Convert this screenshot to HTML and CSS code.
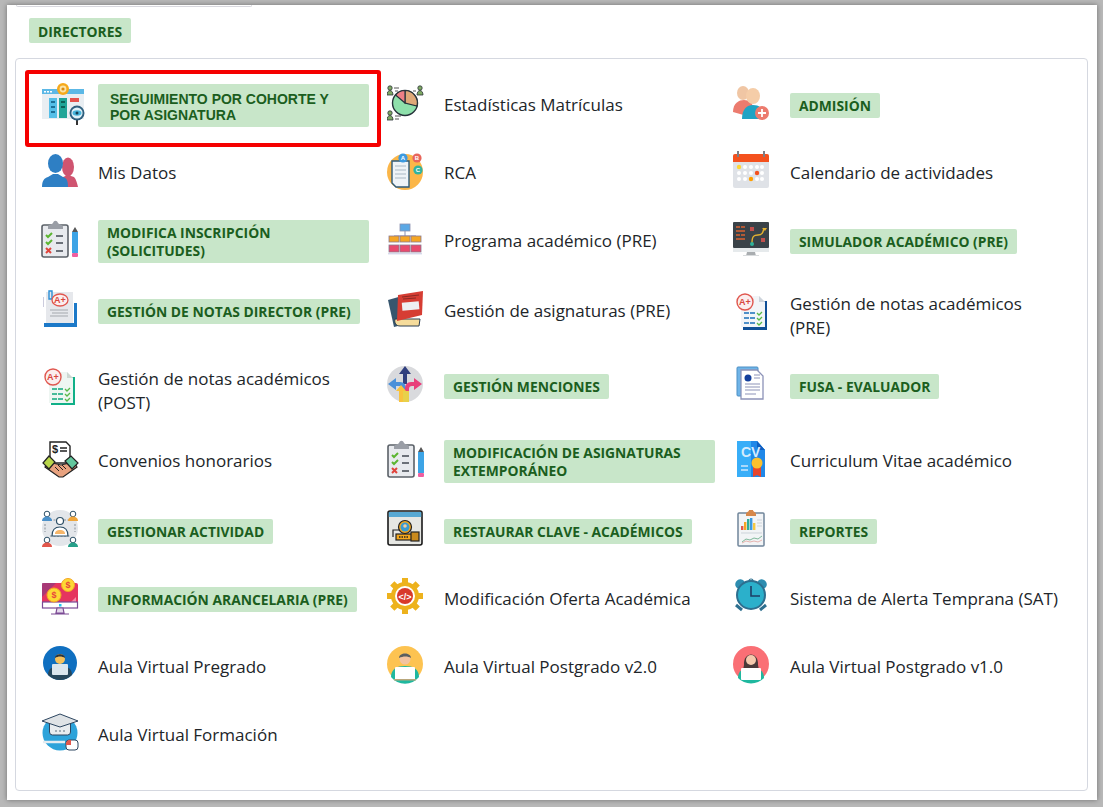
FILE: index.html
```html
<!DOCTYPE html>
<html lang="es">
<head>
  <meta charset="UTF-8">
  <title>Directores</title>
  <link rel="stylesheet" href="styles.css">
</head>
<body>

<!-- iconos repetidos -->
<svg class="simbolos">
  <symbol id="portapapeles" viewBox="0 0 44 44">
    <rect x="1" y="6" width="26" height="32" rx="2" fill="#e8eaee" stroke="#5b6168" stroke-width="1.600"/>
    <path d="M7 8c0-3 4-2 5-4 1-3 4-3 5 0 1 2 5 1 5 4v2H7z" fill="#9a9ea6"/>
    <path d="M5 16l2 2 4-4M5 23l2 2 4-4" fill="none" stroke="#5cb531" stroke-width="2"/>
    <path d="M5 29l5 5M10 29l-5 5" stroke="#e0443c" stroke-width="2"/>
    <path d="M15 17h7M15 24h7M15 32h7" stroke="#6b7078" stroke-width="2"/>
    <rect x="31" y="13" width="6" height="21" fill="#3da4e6"/>
    <path d="M31 13l3-5 3 5z" fill="#555"/>
    <rect x="31" y="34" width="6" height="4" rx="1" fill="#ef5ea0"/>
  </symbol>
</svg>

<div class="ventana">
  <div class="caja-superior"></div>
  <div class="titulo-seccion"><span class="etiqueta">DIRECTORES</span></div>

  <div class="tarjeta">
    <div class="menu">

      <!-- fila 1 -->
      <a class="item" href="#">
        <svg class="icono" viewBox="0 0 44 44">
          <rect x="1" y="6" width="42" height="30" fill="#e9eef2"/>
          <rect x="1" y="6" width="42" height="5" fill="#5cb8e6"/>
          <rect x="3" y="8" width="2" height="1.5" fill="#fff"/><rect x="6" y="8" width="2" height="1.5" fill="#fff"/><rect x="9" y="8" width="2" height="1.5" fill="#fff"/>
          <rect x="8" y="15" width="8" height="20" fill="#55bfe8"/>
          <rect x="18" y="15" width="8" height="20" fill="#21a598"/>
          <rect x="29" y="15" width="9" height="4" fill="#e5524c"/>
          <rect x="10" y="18" width="4" height="2" fill="#1d6f96"/><rect x="10" y="23" width="4" height="2" fill="#1d6f96"/><rect x="10" y="28" width="4" height="2" fill="#1d6f96"/>
          <rect x="20" y="18" width="4" height="2" fill="#0d5f56"/><rect x="20" y="23" width="4" height="2" fill="#0d5f56"/>
          <circle cx="22" cy="6" r="6" fill="#f6a91b"/><circle cx="22" cy="6" r="3.4" fill="#fbe3a6"/><circle cx="22" cy="6" r="1.6" fill="#d98b12"/>
          <path d="M36 36v6" stroke="#333" stroke-width="2"/>
          <circle cx="36" cy="30" r="7.5" fill="#2f5f7e"/><circle cx="36" cy="30" r="5.6" fill="#dff1f8"/>
          <ellipse cx="36" cy="30" rx="4.5" ry="2.8" fill="#48b5dc"/><circle cx="36" cy="30" r="1.5" fill="#173f55"/>
        </svg>
        <div class="texto">
          <span class="etiqueta etiqueta-arial">SEGUIMIENTO POR COHORTE Y POR ASIGNATURA</span>
        </div>
        <div class="marco-rojo"></div>
      </a>

      <a class="item" href="#">
        <svg class="icono" viewBox="0 0 44 44">
          <g fill="#7faa63" stroke="#2b3338" stroke-width=".8">
            <circle cx="3" cy="5" r="2.200"/><path d="M0 12c0-6 6-6 6 0z"/>
            <circle cx="33" cy="5" r="2.200"/><path d="M30 12c0-6 6-6 6 0z"/>
            <circle cx="3" cy="30" r="2.200"/><path d="M0 37c0-6 6-6 6 0z"/>
          </g>
          <path d="M7 5h5M8 8h3M26 8h3M8 33h6M8 36h4" stroke="#555" stroke-width="1"/>
          <circle cx="18" cy="20" r="12.5" fill="#8ee0ab" stroke="#26323a" stroke-width="1.400"/>
          <path d="M18 20V7.500a12.500 12.500 0 0 1 12 15.500z" fill="#dfa878" stroke="#26323a" stroke-width="1.200"/>
          <path d="M18 20L8.500 12a12.500 12.500 0 0 1 9.500-4.500z" fill="#ee7f86" stroke="#26323a" stroke-width="1.200"/>
        </svg>
        <div class="texto">Estadísticas Matrículas</div>
      </a>

      <a class="item" href="#">
        <svg class="icono" viewBox="0 0 44 44">
          <ellipse cx="10" cy="10" rx="6" ry="7" fill="#f0c6a4"/>
          <path d="M0 29c0-9 6-12 11-12s9 3 9 8l-6 8z" fill="#ec7b6e"/>
          <ellipse cx="20" cy="13" rx="7" ry="8" fill="#f5cda8"/>
          <path d="M9 36c0-10 5-14 11-14s10 3 11 10l-4 4z" fill="#1fa3c4"/>
          <circle cx="29" cy="30" r="7" fill="#ec7b6e"/>
          <path d="M29 26v8M25 30h8" stroke="#fff" stroke-width="1.800"/>
        </svg>
        <div class="texto"><span class="etiqueta">ADMISIÓN</span></div>
      </a>

      <!-- fila 2 -->
      <a class="item" href="#">
        <svg class="icono" viewBox="0 0 44 44">
          <ellipse cx="27" cy="16" rx="6" ry="9.500" fill="#cf5470"/>
          <path d="M22 36v-10l5-2 6 2c2 2 3 6 4 10z" fill="#cf5470"/>
          <ellipse cx="14.500" cy="12.500" rx="7.500" ry="9.500" fill="#2e7fc4"/>
          <path d="M1 36c0-6 2-9 6-10l5-3h5l5 3c4 1 5 4 5 10z" fill="#2e7fc4"/>
        </svg>
        <div class="texto">Mis Datos</div>
      </a>

      <a class="item" href="#">
        <svg class="icono" viewBox="0 0 44 44">
          <circle cx="18" cy="21" r="18" fill="#fbb648"/>
          <path d="M5 10h17v26H9l-4-4z" fill="#eef3f7" stroke="#2e5a78" stroke-width="1.400"/>
          <path d="M8 15h11M8 19h11M8 23h11M8 27h11" stroke="#a9b9c6" stroke-width="1.100"/>
          <circle cx="16" cy="7" r="4.600" fill="#3c9ae0"/><circle cx="30" cy="7" r="4.600" fill="#e8655b"/><circle cx="31" cy="19" r="4.600" fill="#2fb3a0"/>
          <text class="letra" x="16" y="9">A</text><text class="letra" x="30" y="9">B</text><text class="letra" x="31" y="21">C</text>
        </svg>
        <div class="texto">RCA</div>
      </a>

      <a class="item" href="#">
        <svg class="icono" viewBox="0 0 44 44">
          <rect y="3" width="36" height="34" rx="2" fill="#dfe2e7"/>
          <path d="M0 11v-6a2 2 0 0 1 2-2h32a2 2 0 0 1 2 2v6z" fill="#f4511e"/>
          <rect x="4" y="0" width="2" height="6" fill="#7c7f86"/><rect x="30" y="0" width="2" height="6" fill="#7c7f86"/>
          <g fill="#fff">
            <circle cx="12" cy="16" r="2"/><circle cx="18" cy="16" r="2"/><circle cx="24" cy="16" r="2"/><circle cx="29" cy="16" r="2"/>
            <circle cx="6" cy="22" r="2"/><circle cx="12" cy="22" r="2"/><circle cx="18" cy="22" r="2"/><circle cx="29" cy="22" r="2"/>
            <circle cx="6" cy="28" r="2"/><circle cx="12" cy="28" r="2"/><circle cx="24" cy="28" r="2"/><circle cx="29" cy="28" r="2"/>
          </g>
          <circle cx="6" cy="16" r="2.200" fill="#fdd835"/><circle cx="24" cy="22" r="2.200" fill="#f4511e"/><circle cx="18" cy="28" r="2.200" fill="#ffa000"/>
        </svg>
        <div class="texto">Calendario de actividades</div>
      </a>

      <!-- fila 3 -->
      <a class="item" href="#">
        <svg class="icono" viewBox="0 0 44 44">
          <use href="#portapapeles"/>
        </svg>
        <div class="texto"><span class="etiqueta">MODIFICA INSCRIPCIÓN (SOLICITUDES)</span></div>
      </a>

      <a class="item" href="#">
        <svg class="icono" viewBox="0 0 44 44">
          <rect x="13" y="5" width="10" height="7" fill="#5ba8e5" stroke="#8a8fb0" stroke-width=".8"/>
          <path d="M18 12v5M7 17h22" stroke="#8a8fb0" stroke-width="1"/>
          <g stroke="#8a7a90" stroke-width=".8">
            <rect x="2" y="17" width="10" height="6" fill="#f5a623"/><rect x="13" y="17" width="10" height="6" fill="#f5a623"/><rect x="24" y="17" width="10" height="6" fill="#f5a623"/>
            <rect x="2" y="26" width="10" height="7" fill="#e84a6e"/><rect x="13" y="26" width="10" height="7" fill="#e84a6e"/><rect x="24" y="26" width="10" height="7" fill="#e84a6e"/>
          </g>
          <rect x="1" y="34" width="34" height="1.400" fill="#d5d8ea"/>
        </svg>
        <div class="texto">Programa académico (PRE)</div>
      </a>

      <a class="item" href="#">
        <svg class="icono" viewBox="0 0 44 44">
          <rect y="3" width="36" height="26" rx="1" fill="#3a4248"/>
          <rect y="29" width="36" height="4" fill="#e6eaec"/>
          <path d="M14 33h8l1 4H13z" fill="#a9adb0"/><rect x="10" y="36" width="16" height="1" fill="#d8dbdd"/>
          <g fill="#b25a36">
            <rect x="3" y="7" width="4" height="2"/><rect x="8" y="7" width="4" height="2"/><rect x="3" y="11" width="9" height="2"/><rect x="3" y="15" width="4" height="2"/><rect x="8" y="15" width="4" height="2"/><rect x="3" y="19" width="9" height="2"/>
          </g>
          <rect x="17" y="8" width="4" height="4" fill="#c0504d"/><rect x="28" y="19" width="4" height="4" fill="#c0504d"/>
          <path d="M19 24c0-7 2-8 6-8s5-2 6-7" fill="none" stroke="#e5b22f" stroke-width="1.400"/>
          <circle cx="19" cy="25" r="2" fill="#2fb39a"/><path d="M29 9h5l-2 3z" fill="#e5b22f"/>
        </svg>
        <div class="texto"><span class="etiqueta">SIMULADOR ACADÉMICO (PRE)</span></div>
      </a>

      <!-- fila 4 -->
      <a class="item" href="#">
        <svg class="icono" viewBox="0 0 44 44">
          <path d="M33 14h3v24H3v-4h30z" fill="#1c79c8"/>
          <rect x="2" y="8" width="1" height="10" fill="#ccd"/>
          <rect x="5" y="3" width="27" height="31" fill="#e6e8ec"/>
          <path d="M8 2h3v8H8z" fill="none" stroke="#2a8fd6" stroke-width="1.400"/>
          <ellipse cx="19" cy="11" rx="8" ry="6" fill="#fbeeee" stroke="#e0574f" stroke-width="1.300"/>
          <text class="nota" x="19" y="14">A+</text>
          <path d="M9 21h18M11 24h16M9 27h18" stroke="#a4a8ad" stroke-width="1"/>
        </svg>
        <div class="texto"><span class="etiqueta">GESTIÓN DE NOTAS DIRECTOR (PRE)</span></div>
      </a>

      <a class="item" href="#">
        <svg class="icono" viewBox="0 0 44 44">
          <path d="M1 11l14-4 4 28-12 3z" fill="#37566e"/>
          <path d="M8 30h25l-1 7H13c-4 0-6-3-5-7z" fill="#f6dc9b" stroke="#2c3e50" stroke-width="1"/>
          <path d="M11 6L36 2l-1 24-25 6z" fill="#d63d33"/>
          <rect x="15" y="13" width="17" height="8" fill="#eef0f2" transform="rotate(-5 23 16)"/>
          <path d="M15 8l17-2M16 10l13-1" stroke="#8b2a24" stroke-width="1"/>
        </svg>
        <div class="texto">Gestión de asignaturas (PRE)</div>
      </a>

      <a class="item" href="#">
        <svg class="icono" viewBox="0 0 44 44">
          <rect x="10" y="12" width="24" height="29" fill="#0f4f96"/>
          <path d="M8 7h18l6 6v25H8z" fill="#f2f5f8"/>
          <path d="M26 7v6h6z" fill="#cdd4dc"/>
          <circle cx="12" cy="13" r="8" fill="#fbeeee" stroke="#e0574f" stroke-width="1.400"/>
          <text class="nota" x="12" y="16">A+</text>
          <path d="M11 24h11M11 29h11M11 34h11" stroke="#1a6fb8" stroke-width="1.500" stroke-dasharray="5 1"/>
          <path d="M24 24l2 2 3-3M24 29l2 2 3-3M24 34l2 2 3-3" fill="none" stroke="#58b947" stroke-width="1.300"/>
        </svg>
        <div class="texto dos-lineas">Gestión de notas académicos (PRE)</div>
      </a>

      <!-- fila 5 -->
      <a class="item" href="#">
        <svg class="icono" viewBox="0 0 44 44">
          <rect x="10" y="13" width="24" height="28" fill="#10b088"/>
          <path d="M8 8h18l6 6v25H8z" fill="#eef6f2"/>
          <path d="M26 8v6h6z" fill="#cdd8d2"/>
          <circle cx="12" cy="13" r="8" fill="#fbeeee" stroke="#e0574f" stroke-width="1.400"/>
          <text class="nota" x="12" y="16">A+</text>
          <path d="M11 25h11M11 30h11M11 35h11" stroke="#10a87e" stroke-width="1.500" stroke-dasharray="5 1"/>
          <path d="M24 25l2 2 3-3M24 30l2 2 3-3M24 35l2 2 3-3" fill="none" stroke="#58b947" stroke-width="1.300"/>
        </svg>
        <div class="texto dos-lineas">Gestión de notas académicos (POST)</div>
      </a>

      <a class="item" href="#">
        <svg class="icono" viewBox="0 0 44 44">
          <circle cx="18" cy="20" r="18" fill="#d9dadd"/>
          <path d="M16 20V10h-4l6-8 6 8h-4v10z" fill="#303f7e"/>
          <path d="M1 20l8-6v4h4c4 0 6 3 6 7v4h-4v-4c0-2-1-3-3-3H9v4z" fill="#4a90d9"/>
          <path d="M35 20l-8-6v4h-3c-4 0-6 3-6 7v4h4v-4c0-2 1-3 3-3h2v4z" fill="#e83e7a"/>
          <path d="M12 38V27H9l5-6 5 6h-3v11z" fill="#f9c23c"/>
          <rect x="16" y="27" width="6" height="11" fill="#e8d14a"/>
        </svg>
        <div class="texto"><span class="etiqueta">GESTIÓN MENCIONES</span></div>
      </a>

      <a class="item" href="#">
        <svg class="icono" viewBox="0 0 44 44">
          <rect x="4" y="3" width="21" height="29" rx="1" fill="#6fb4e8" stroke="#4d8fc4"/>
          <path d="M8 6h16l6 6v23H8z" fill="#fff" stroke="#8d93b8" stroke-width="1.300"/>
          <circle cx="15" cy="14" r="3.500" fill="#143f9c"/>
          <path d="M21 11h6M21 14h6M12 20h15M12 23h15M12 26h15M12 30h11" stroke="#8d93b8" stroke-width="1"/>
        </svg>
        <div class="texto"><span class="etiqueta">FUSA - EVALUADOR</span></div>
      </a>

      <!-- fila 6 -->
      <a class="item" href="#">
        <svg class="icono" viewBox="0 0 44 44">
          <path d="M9 3h16l4 4v17H9z" fill="#fff" stroke="#222" stroke-width="1.400"/>
          <text class="dolar" x="14" y="14">$</text>
          <path d="M19 9h7M19 12h7" stroke="#222" stroke-width="1.400"/>
          <path d="M7 23l13 3 13-3 3 5-14 10h-4L4 28z" fill="#e8a27f" stroke="#222" stroke-width="1.200"/>
          <path d="M2 24l6-7 6 6-6 7z" fill="#b9d64b" stroke="#222" stroke-width="1.200"/>
          <path d="M24 22l6-5 7 7-6 6z" fill="#63c79d" stroke="#222" stroke-width="1.200"/>
          <path d="M14 28l4 4M17 26l5 5M21 26l4 4" stroke="#222" stroke-width="1"/>
        </svg>
        <div class="texto">Convenios honorarios</div>
      </a>

      <a class="item" href="#">
        <svg class="icono" viewBox="0 0 44 44">
          <use href="#portapapeles"/>
        </svg>
        <div class="texto"><span class="etiqueta">MODIFICACIÓN DE ASIGNATURAS EXTEMPORÁNEO</span></div>
      </a>

      <a class="item" href="#">
        <svg class="icono" viewBox="0 0 44 44">
          <path d="M4 2h20l8 9v27H4z" fill="#38aef8"/>
          <path d="M18 2h6l8 9v27H18z" fill="#2088e8"/>
          <path d="M24 2v9h8z" fill="#0f5fc0"/>
          <text class="cv" x="8" y="18">CV</text>
          <path d="M8 27h7M8 31h7" stroke="#cfe7fb" stroke-width="1.500"/>
          <path d="M20 28h8v10l-4-2-4 2z" fill="#e8452c"/>
          <circle cx="24" cy="24" r="5.500" fill="#fbc02d"/>
        </svg>
        <div class="texto">Curriculum Vitae académico</div>
      </a>

      <!-- fila 7 -->
      <a class="item" href="#">
        <svg class="icono" viewBox="0 0 44 44">
          <circle cx="19" cy="19" r="18" fill="#e3e6ea"/>
          <path d="M9 11h20M9 27h20M4 15v8M34 15v8" stroke="#a7adb4" stroke-width="1.500" stroke-dasharray="2 1.500"/>
          <circle cx="19" cy="12" r="3.500" fill="#fff" stroke="#2d4f66" stroke-width="1.200"/>
          <path d="M11 27c0-6 3-9 8-9s8 3 8 9z" fill="#fff" stroke="#2d4f66" stroke-width="1.200"/>
          <path d="M14 25c0-3 2-4 5-4s5 1 5 4z" fill="#f6b66a"/>
          <circle cx="6" cy="5" r="2.800" fill="#fff" stroke="#2d4f66"/><path d="M1 12c0-6 10-6 10 0z" fill="#4a90c9"/>
          <circle cx="32" cy="5" r="2.800" fill="#fff" stroke="#2d4f66"/><path d="M27 12c0-6 10-6 10 0z" fill="#f0a63c"/>
          <circle cx="6" cy="31" r="2.800" fill="#fff" stroke="#2d4f66"/><path d="M1 38c0-6 10-6 10 0z" fill="#e2574c"/>
          <circle cx="32" cy="31" r="2.800" fill="#fff" stroke="#2d4f66"/><path d="M27 38c0-6 10-6 10 0z" fill="#26a08a"/>
        </svg>
        <div class="texto"><span class="etiqueta">GESTIONAR ACTIVIDAD</span></div>
      </a>

      <a class="item" href="#">
        <svg class="icono" viewBox="0 0 44 44">
          <rect x="1" y="2" width="34" height="34" rx="2" fill="#e6e7e3" stroke="#1a1a1a" stroke-width="1.600"/>
          <rect x="1.800" y="3" width="32.400" height="5" fill="#58a9d3"/>
          <path d="M6 28v-7h8" fill="none" stroke="#222" stroke-width="1.200"/>
          <circle cx="18" cy="18" r="6.500" fill="#f5a81c" stroke="#222" stroke-width="1.200"/>
          <circle cx="18" cy="18" r="4.500" fill="#3a9bd1"/><circle cx="18" cy="17" r="1.800" fill="#f4cc9b"/>
          <rect x="9" y="25" width="16" height="6" fill="#f5a81c" stroke="#222" stroke-width="1.200"/>
          <path d="M12 28h9" stroke="#222" stroke-width="1.500" stroke-dasharray="1.500 1"/>
          <rect x="24" y="23" width="8" height="9" fill="#c98a1d" stroke="#222" stroke-width="1.200"/>
        </svg>
        <div class="texto"><span class="etiqueta">RESTAURAR CLAVE - ACADÉMICOS</span></div>
      </a>

      <a class="item" href="#">
        <svg class="icono" viewBox="0 0 44 44">
          <rect x="5" y="4" width="26" height="33" rx="1" fill="#f2f4f6" stroke="#70859a" stroke-width="1.500"/>
          <path d="M13 5c0-2 3-2 3-4h4c0 2 3 2 3 4v2H13z" fill="#d6874a"/>
          <rect x="8" y="17" width="2.400" height="4" fill="#e2574c"/><rect x="11" y="13" width="2.400" height="8" fill="#f5a623"/><rect x="14" y="10" width="2.400" height="11" fill="#2fae9a"/><rect x="17" y="9" width="2.400" height="12" fill="#3d9ae0"/><rect x="20" y="14" width="2.400" height="7" fill="#f5c842"/>
          <path d="M24 11h5M24 14h5M24 17h5M8 24h21" stroke="#ccd3d9" stroke-width="1"/>
          <path d="M9 33l4-3 4 1 4-2 4 1 4-3" fill="none" stroke="#7fb89a" stroke-width="1"/>
          <path d="M9 34l4-2 4 1 4-1 4 1 4-2" fill="none" stroke="#e2a29c" stroke-width=".8"/>
        </svg>
        <div class="texto"><span class="etiqueta">REPORTES</span></div>
      </a>

      <!-- fila 8 -->
      <a class="item" href="#">
        <svg class="icono" viewBox="0 0 44 44">
          <path d="M1 8a2 2 0 0 1 2-2h32a2 2 0 0 1 2 2v20H1z" fill="#e5355f"/>
          <path d="M1 6h14L1 20z" fill="#8e3a80" opacity=".7"/>
          <path d="M27 28l8-8v8z" fill="#f58ca8"/>
          <rect x="1.500" y="25" width="35" height="6" fill="#fff" stroke="#7b4a94" stroke-width="1.200"/>
          <rect x="18" y="27" width="2.500" height="2.500" fill="#1fc4ee"/>
          <path d="M16 31l-1 5h8l-1-5zM10 37h18" fill="#e4d8ec" stroke="#7b4a94" stroke-width="1.200"/>
          <circle cx="13" cy="18" r="7" fill="#fdd835" stroke="#f5a623"/><text class="moneda" x="13" y="21">$</text>
          <circle cx="27" cy="8" r="6.500" fill="#fdd835" stroke="#f5a623"/><text class="moneda" x="27" y="11">$</text>
        </svg>
        <div class="texto"><span class="etiqueta">INFORMACIÓN ARANCELARIA (PRE)</span></div>
      </a>

      <a class="item" href="#">
        <svg class="icono" viewBox="0 0 44 44">
          <circle cx="18" cy="19" r="14" fill="#edb21d"/>
          <path d="M18 1v36M0 19h36M5.300 6.300l25.400 25.400M30.700 6.300L5.300 31.700" stroke="#edb21d" stroke-width="6"/>
          <circle cx="18" cy="19" r="10" fill="#fff"/>
          <circle cx="18" cy="19" r="8" fill="#d8392b"/>
          <text class="codigo" x="18" y="22.500">&lt;/&gt;</text>
        </svg>
        <div class="texto">Modificación Oferta Académica</div>
      </a>

      <a class="item" href="#">
        <svg class="icono" viewBox="0 0 44 44">
          <ellipse cx="7" cy="7" rx="5" ry="4.500" fill="#2d8db0" transform="rotate(-40 7 7)"/>
          <ellipse cx="29" cy="7" rx="5" ry="4.500" fill="#2d8db0" transform="rotate(40 29 7)"/>
          <circle cx="18" cy="4" r="2" fill="none" stroke="#2d6f8f" stroke-width="1.200"/>
          <path d="M3 28l6 5M33 28l-6 5" stroke="#2d6f8f" stroke-width="3"/>
          <circle cx="18" cy="18" r="14" fill="#2bb0cb" stroke="#2d6f8f" stroke-width="2"/>
          <path d="M18 9v10h9" fill="none" stroke="#1e3f66" stroke-width="1.600"/>
        </svg>
        <div class="texto">Sistema de Alerta Temprana (SAT)</div>
      </a>

      <!-- fila 9 -->
      <a class="item" href="#">
        <svg class="icono" viewBox="0 0 44 44">
          <circle cx="19" cy="18" r="17" fill="#0f6fc0"/>
          <path d="M7 30c0-7 5-9 12-9s12 2 12 9a17 17 0 0 1-24 0z" fill="#27475c"/>
          <circle cx="19" cy="14" r="5" fill="#f5c15c"/>
          <path d="M14 13c0-5 10-5 10 0-3-2-7-2-10 0z" fill="#27343f"/>
          <rect x="11" y="19" width="16" height="11" rx="1" fill="#dbe6ee"/>
        </svg>
        <div class="texto">Aula Virtual Pregrado</div>
      </a>

      <a class="item" href="#">
        <svg class="icono" viewBox="0 0 44 44">
          <circle cx="18" cy="19" r="18" fill="#fdc351"/>
          <path d="M4 32c0-8 6-11 14-11s14 3 14 11a18 18 0 0 1-28 0z" fill="#1fb89f"/>
          <circle cx="18" cy="14" r="5.500" fill="#f3c3a0"/>
          <path d="M12 13c0-6 12-6 12 0-3-2-8-2-12 0z" fill="#5a5f60"/>
          <rect x="8" y="22" width="20" height="13" rx="1" fill="#fff"/>
          <rect x="7" y="34" width="22" height="1.500" fill="#b9a77c"/>
        </svg>
        <div class="texto">Aula Virtual Postgrado v2.0</div>
      </a>

      <a class="item" href="#">
        <svg class="icono" viewBox="0 0 44 44">
          <circle cx="18" cy="19" r="18" fill="#fa6f75"/>
          <path d="M11 20c-1-14 15-14 14 0l1 5H10z" fill="#4a3a3a"/>
          <path d="M5 33c0-8 6-10 13-10s13 2 13 10a18 18 0 0 1-26 0z" fill="#1fb89f"/>
          <circle cx="18" cy="15" r="5" fill="#f5c9ad"/>
          <rect x="8" y="23" width="20" height="12" rx="1" fill="#fff"/>
        </svg>
        <div class="texto">Aula Virtual Postgrado v1.0</div>
      </a>

      <!-- fila 10 -->
      <a class="item" href="#">
        <svg class="icono" viewBox="0 0 44 44">
          <circle cx="19" cy="20" r="17.500" fill="#2da3da"/>
          <path d="M8.500 9v10a3 3 0 0 0 3 3h15a3 3 0 0 0 3-3V9z" fill="#e8ecef" stroke="#2d4660"/>
          <path d="M1 8L19 1l18 7-18 6z" fill="#dfe3e6" stroke="#2d4660"/>
          <path d="M14 18h2M18 18h2M22 18h2" stroke="#8c99a5" stroke-width="1.500"/>
          <path d="M2 29h22" stroke="#e4ecf1" stroke-width="2.500"/>
          <rect x="25" y="27" width="12" height="10" rx="3" fill="#fff" stroke="#2d4660"/>
          <path d="M25 30a4 4 0 0 1 5-3v5h-5z" fill="#e2574c"/>
        </svg>
        <div class="texto">Aula Virtual Formación</div>
      </a>

    </div>
  </div>
</div>

</body>
</html>
```

FILE: styles.css
```css
html, body {
  margin: 0;
  padding: 0;
  height: 100%;
}
body {
  background: #b8b8b8;
  padding: 5px 6px 7px 7px;
  box-sizing: border-box;
  overflow: hidden;
  font-family: "Open Sans", sans-serif;
  color: #212529;
}
.ventana {
  background: #fff;
  height: 100%;
  box-shadow: 0 0 5px rgba(0,0,0,0.4);
  padding: 0 9px 0 8px;
  box-sizing: border-box;
}
.caja-superior {
  width: 236px;
  height: 2px;
  margin-left: 1px;
  border: 1px solid #d8d8de;
  border-top: none;
  border-radius: 0 0 4px 4px;
  box-sizing: border-box;
}
.titulo-seccion {
  margin: 11px 0 15px 14px;
  height: 25px;
}
.titulo-seccion .etiqueta {
  margin-top: 0;
  padding: 5px 9px 2px;
}
.etiqueta {
  display: inline-block;
  background: #c8e6c9;
  color: #1b5e20;
  font-weight: 700;
  font-size: 13.85px;
  line-height: 18px;
  padding: 4px 9px 3px;
  margin-top: 1px;
  border-radius: 2px;
}
.etiqueta-arial {
  font-family: "Liberation Sans", Arial, sans-serif;
  font-size: 14px;
  line-height: 16px;
  padding: 7px 12px 4px;
  margin-top: 0;
  height: 32px;
}
.tarjeta {
  height: 733px;
  border: 1px solid #d5d8e0;
  border-radius: 4px;
  padding: 12px 20px 0 13px;
  box-sizing: border-box;
}
.menu {
  display: grid;
  grid-template-columns: repeat(3, 346px);
  grid-template-rows: 68px 68px 68px 72px 78px 72px 68px 68px 68px 68px;
}
.item {
  position: relative;
  display: flex;
  align-items: center;
  gap: 13px;
  padding: 0 6px 0 12px;
  text-decoration: none;
  color: inherit;
}
.icono {
  width: 44px;
  height: 44px;
  flex: none;
  display: block;
}
.texto {
  flex: 1;
  font-size: 17px;
  line-height: 24px;
}
.dos-lineas {
  padding-top: 10px;
}
.marco-rojo {
  position: absolute;
  left: -4px;
  top: -1px;
  width: 356px;
  height: 77px;
  border: 4px solid #f50000;
  border-radius: 3px;
  box-sizing: border-box;
}
.simbolos {
  position: absolute;
  width: 0;
  height: 0;
}
.letra {
  font: 700 6px "Liberation Sans", sans-serif;
  fill: #fff;
  text-anchor: middle;
}
.nota {
  font: 700 9px "Liberation Sans", sans-serif;
  fill: #d8453d;
  text-anchor: middle;
}
.dolar {
  font: 700 11px "Liberation Sans", sans-serif;
  fill: #222;
  text-anchor: middle;
}
.moneda {
  font: 700 9px "Liberation Sans", sans-serif;
  fill: #e8453c;
  text-anchor: middle;
}
.cv {
  font: 700 14px "Liberation Sans", sans-serif;
  fill: #d5ecfd;
}
.codigo {
  font: 700 9px "Liberation Sans", sans-serif;
  fill: #fff;
  text-anchor: middle;
}
```
